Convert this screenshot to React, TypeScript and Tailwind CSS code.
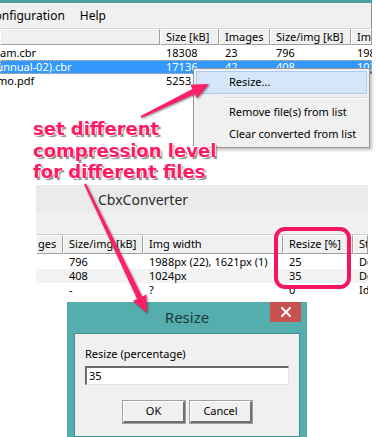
import React from "react";

const topCols = [160, 59, 51, 81, 21];
const mainCols = [27, 80, 140, 70, 15];

function arrowPoints(x1: number, y1: number, x2: number, y2: number) {
  const dx = x2 - x1;
  const dy = y2 - y1;
  const len = Math.hypot(dx, dy);
  const ux = dx / len;
  const uy = dy / len;
  const nx = -uy;
  const ny = ux;
  const headLen = 17;
  const bx = x2 - ux * headLen;
  const by = y2 - uy * headLen;
  const p = (x: number, y: number) => `${x.toFixed(1)},${y.toFixed(1)}`;
  return [
    p(x1 + nx * 1, y1 + ny * 1),
    p(bx + nx * 2.8, by + ny * 2.8),
    p(bx + nx * 7.5, by + ny * 7.5),
    p(x2, y2),
    p(bx - nx * 7.5, by - ny * 7.5),
    p(bx - nx * 2.8, by - ny * 2.8),
    p(x1 - nx * 1, y1 - ny * 1),
  ].join(" ");
}

function HeaderCell({ w, children }: { w: number; children?: React.ReactNode }) {
  return (
    <div
      style={{ width: w }}
      className="shrink-0 h-full flex items-center pl-[5px] overflow-hidden whitespace-nowrap bg-[#f0f0f0] border-t border-l border-t-white border-l-white border-r border-b border-r-[#a0a0a0] border-b-[#a0a0a0]"
    >
      {children}
    </div>
  );
}

function Cell({ w, children }: { w: number; children?: React.ReactNode }) {
  return (
    <div style={{ width: w }} className="shrink-0 pl-[6px] overflow-hidden whitespace-nowrap">
      {children}
    </div>
  );
}

function TopWindow() {
  const rows = [
    { name: "am.cbr", cells: ["18308", "23", "796", "1988"], selected: false, indent: 0 },
    { name: "annual-02).cbr", cells: ["17136", "42", "408", "1024"], selected: true, indent: -3 },
    { name: "mo.pdf", cells: ["5253", "", "", ""], selected: false, indent: -3 },
  ];

  return (
    <div className="h-[185px] w-[376px] flex flex-col">
      <div className="h-[3px] w-[372px] bg-[#4aa19f]" />
      <div className="h-[25px] w-[372px] flex items-center bg-[#f0f0f0] border-r border-[#8a8a8a] text-[12px]">
        <span className="-ml-[13px]">Configuration</span>
        <span className="ml-[15px]">Help</span>
      </div>
      <div className="h-[17px] w-[372px] flex border-t border-[#d8d8d8] border-r border-r-[#8a8a8a]">
        <HeaderCell w={topCols[0]} />
        <HeaderCell w={topCols[1]}>Size [kB]</HeaderCell>
        <HeaderCell w={topCols[2]}>Images</HeaderCell>
        <HeaderCell w={topCols[3]}>Size/img [kB]</HeaderCell>
        <HeaderCell w={topCols[4]}>Img</HeaderCell>
      </div>
      <div className="flex flex-col pt-[1px]">
        {rows.map((r) => (
          <div
            key={r.name}
            className={`h-[14px] w-[372px] flex items-center leading-[14px] ${
              r.selected ? "bg-[#3399ff] text-white outline outline-1 outline-dotted outline-[#f0b070] -outline-offset-1" : ""
            }`}
          >
            <div style={{ width: topCols[0] }} className="shrink-0 overflow-hidden whitespace-nowrap">
              <span style={{ marginLeft: r.indent }}>{r.name}</span>
            </div>
            {r.cells.map((c, i) => (
              <Cell key={i} w={topCols[i + 1]}>
                {c}
              </Cell>
            ))}
          </div>
        ))}
      </div>
    </div>
  );
}

function ContextMenu() {
  return (
    <div className="absolute left-[193px] top-[68px] w-[177px] h-[80px] bg-[#f0f0f0] border border-[#979797] shadow-[2px_2px_3px_rgba(0,0,0,0.25)] py-[2px] flex flex-col">
      <div className="h-[23px] mx-[2px] flex items-center pl-[32px] bg-[#d5e6f8] border border-[#aaccf0]">
        Resize...
      </div>
      <div className="h-[7px] flex items-center pl-[28px] pr-[2px]">
        <div className="w-full h-[2px] border-t border-[#d4d4d4] border-b border-b-white" />
      </div>
      <div className="h-[22px] flex items-center pl-[35px]">Remove file(s) from list</div>
      <div className="h-[22px] flex items-center pl-[35px]">Clear converted from list</div>
    </div>
  );
}

function MainWindow() {
  const rows = [
    { cells: ["", "796", "1988px (22), 1621px (1)", "25", "Done"], alt: false },
    { cells: ["", "408", "1024px", "35", "Done"], alt: true },
    { cells: ["", "-", "?", "0", "Idle"], alt: false },
  ];
  return (
    <div className="ml-[36px] w-[332px] h-[117px] flex flex-col overflow-hidden">
      <div className="h-[28px] shrink-0 flex items-center pl-[62px] bg-[#ebebeb] text-[14px] text-[#2b2b2b]">
        CbxConverter
      </div>
      <div className="h-[22px] shrink-0 bg-[#f0f0f0] border-b border-[#d0d0d0]" />
      <div className="h-[19px] shrink-0 flex">
        <HeaderCell w={mainCols[0]}>
          <span className="-ml-[4px]">ges</span>
        </HeaderCell>
        <HeaderCell w={mainCols[1]}>Size/img [kB]</HeaderCell>
        <HeaderCell w={mainCols[2]}>Img width</HeaderCell>
        <HeaderCell w={mainCols[3]}>Resize [%]</HeaderCell>
        <HeaderCell w={mainCols[4]}>Status</HeaderCell>
      </div>
      <div className="flex flex-col pt-[1px]">
        {rows.map((r, ri) => (
          <div key={ri} className={`h-[14px] flex items-center leading-[14px] ${r.alt ? "bg-[#f3f3f3]" : "bg-white"}`}>
            {r.cells.map((c, i) =>
              i === 0 ? (
                <div key={i} style={{ width: mainCols[0] }} className="shrink-0" />
              ) : (
                <Cell key={i} w={mainCols[i]}>
                  {c}
                </Cell>
              )
            )}
          </div>
        ))}
      </div>
    </div>
  );
}

function ResizeDialog() {
  return (
    <div className="relative ml-[67px] w-[240px] h-[135px] bg-[#55aead] px-[7px] flex flex-col">
      <div className="h-[31px] shrink-0 flex items-center justify-center text-[15px] text-[#1d3a3a]">
        Resize
      </div>
      <div className="absolute right-[6px] top-0 w-[31px] h-[20px] bg-[#c75050] flex items-center justify-center">
        <svg width="10" height="10" viewBox="0 0 10 10">
          <path d="M1 1 L9 9 M9 1 L1 9" stroke="white" strokeWidth="2" strokeLinecap="square" />
        </svg>
      </div>
      <div className="flex-1 bg-[#f0f0f0] border border-[#3e8f8e] pl-[10px] pt-[13px] flex flex-col">
        <div className="leading-[14px]">Resize (percentage)</div>
        <div className="mt-[5px] w-[204px] h-[19px] bg-white border-t-2 border-l-2 border-[#6a6a6a] border-r border-b border-r-[#e3e3e3] border-b-[#e3e3e3] flex items-center pl-[2px]">
          35
        </div>
        <div className="mt-[16px] flex gap-[5px] pl-[38px]">
          <div className="w-[62px] h-[22px] flex items-center justify-center bg-[#f0f0f0] border-t border-l border-white border-r-2 border-b-2 border-r-[#6f6f6f] border-b-[#6f6f6f] outline outline-1 outline-[#a0a0a0]">
            OK
          </div>
          <div className="w-[62px] h-[22px] flex items-center justify-center bg-[#f0f0f0] border-t border-l border-white border-r-2 border-b-2 border-r-[#6f6f6f] border-b-[#6f6f6f] outline outline-1 outline-[#a0a0a0]">
            Cancel
          </div>
        </div>
      </div>
    </div>
  );
}

function Annotations() {
  return (
    <>
      <div className="absolute left-[274px] top-[227px] w-[77px] h-[62px] border-[4px] border-[#f5175d] rounded-[11px]" />
      <svg
        className="absolute left-0 top-0 [filter:drop-shadow(1px_1px_1px_rgba(0,0,0,0.45))]"
        width="376"
        height="437"
        viewBox="0 0 376 437"
      >
        <polygon points={arrowPoints(141, 117, 209, 84)} fill="#ff1f66" />
        <polygon points={arrowPoints(85, 184, 147, 313)} fill="#ff1f66" />
      </svg>
      <div className="absolute left-[33px] top-[118px] font-['DejaVu_Sans',sans-serif] font-bold text-[18px] leading-[21.5px] text-[#ff1a66] [text-shadow:-1px_-1px_0_#fff,1px_-1px_0_#fff,-1px_1px_0_#fff,2px_2px_1px_rgba(0,0,0,0.45)] whitespace-nowrap">
        <div>set different</div>
        <div>compression level</div>
        <div>for different files</div>
      </div>
    </>
  );
}

export default function App() {
  return (
    <div className="relative w-[376px] h-[437px] overflow-hidden bg-white font-['Noto_Sans',sans-serif] text-[11px] text-black">
      <TopWindow />
      <MainWindow />
      <ResizeDialog />
      <ContextMenu />
      <Annotations />
    </div>
  );
}
